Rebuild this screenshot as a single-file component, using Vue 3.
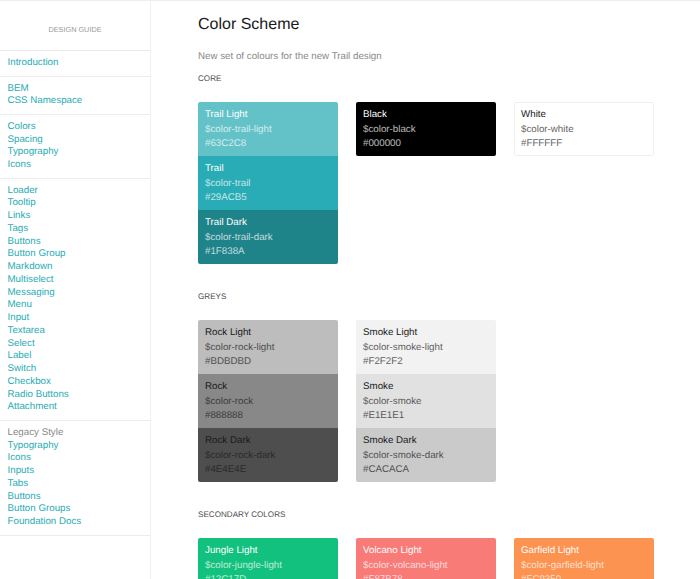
<template>
  <div class="page">
    <aside class="sidebar">
      <div class="brand">DESIGN GUIDE</div>
      <ul v-for="(group, i) in nav" :key="i" class="nav-group">
        <li v-for="item in group" :key="item" :class="{ muted: item === 'Legacy Style' }">{{ item }}</li>
      </ul>
    </aside>

    <main class="content">
      <h1 class="title">Color Scheme</h1>
      <p class="intro">New set of colours for the new Trail design</p>

      <section v-for="section in sections" :key="section.name" class="section">
        <h2 class="section-name">{{ section.name }}</h2>
        <div class="palette-row">
          <div v-for="(palette, p) in section.palettes" :key="p" class="palette">
            <div
              v-for="color in palette"
              :key="color.hex"
              class="swatch"
              :class="{ dark: color.dark, bordered: color.hex === 'FFFFFF' }"
              :style="{ background: '#' + color.hex }"
            >
              <div>{{ color.name }}</div>
              <div class="sub">{{ color.token }}</div>
              <div class="sub">#{{ color.hex }}</div>
            </div>
          </div>
        </div>
      </section>
    </main>
  </div>
</template>

<script setup>
const nav = [
  ['Introduction'],
  ['BEM', 'CSS Namespace'],
  ['Colors', 'Spacing', 'Typography', 'Icons'],
  ['Loader', 'Tooltip', 'Links', 'Tags', 'Buttons', 'Button Group', 'Markdown', 'Multiselect', 'Messaging', 'Menu', 'Input', 'Textarea', 'Select', 'Label', 'Switch', 'Checkbox', 'Radio Buttons', 'Attachment'],
  ['Legacy Style', 'Typography', 'Icons', 'Inputs', 'Tabs', 'Buttons', 'Button Groups', 'Foundation Docs']
]

const color = (name, token, hex, dark = false) => ({ name, token, hex, dark })

const sections = [
  {
    name: 'CORE',
    palettes: [
      [
        color('Trail Light', '$color-trail-light', '63C2C8'),
        color('Trail', '$color-trail', '29ACB5'),
        color('Trail Dark', '$color-trail-dark', '1F838A')
      ],
      [color('Black', '$color-black', '000000')],
      [color('White', '$color-white', 'FFFFFF', true)]
    ]
  },
  {
    name: 'GREYS',
    palettes: [
      [
        color('Rock Light', '$color-rock-light', 'BDBDBD', true),
        color('Rock', '$color-rock', '888888', true),
        color('Rock Dark', '$color-rock-dark', '4E4E4E', true)
      ],
      [
        color('Smoke Light', '$color-smoke-light', 'F2F2F2', true),
        color('Smoke', '$color-smoke', 'E1E1E1', true),
        color('Smoke Dark', '$color-smoke-dark', 'CACACA', true)
      ]
    ]
  },
  {
    name: 'SECONDARY COLORS',
    palettes: [
      [color('Jungle Light', '$color-jungle-light', '12C17D')],
      [color('Volcano Light', '$color-volcano-light', 'F87B78')],
      [color('Garfield Light', '$color-garfield-light', 'FC9350')]
    ]
  }
]
</script>

<style>
html,
body {
  margin: 0;
  background: #fff;
  overflow: hidden;
}
</style>

<style scoped>
.page {
  display: flex;
  height: 579px;
  overflow: hidden;
  border-top: 1px solid #eeeeee;
  box-sizing: border-box;
  font-family: "Liberation Sans", Arial, sans-serif;
  text-rendering: geometricPrecision;
}

.sidebar {
  width: 151px;
  flex: none;
  box-sizing: border-box;
  border-right: 1px solid #f0f0f0;
}

.brand {
  height: 50px;
  box-sizing: border-box;
  padding-top: 24px;
  text-align: center;
  font-size: 7.3px;
  line-height: 10px;
  color: #999;
  border-bottom: 1px solid #e8e8e8;
}

.nav-group {
  list-style: none;
  margin: 0;
  padding: 6px 0 5.8px 7.5px;
  border-bottom: 1px solid #ececec;
  font-size: 9.75px;
  line-height: 12.75px;
  color: #29acb5;
}

.muted {
  color: #888;
}

.content {
  flex: 1;
  padding: 15px 0 0 47px;
  min-width: 0;
}

.title {
  margin: 0;
  font-size: 16px;
  line-height: 18px;
  font-weight: 400;
  color: #1a1a1a;
}

.intro {
  margin: 16px 0 0;
  font-size: 9.75px;
  line-height: 13px;
  color: #8a8a8a;
}

.section-name {
  margin: 0;
  font-size: 8.1px;
  line-height: 11px;
  font-weight: 400;
  color: #4e4e4e;
}

.section {
  margin-top: 10px;
  padding-bottom: 27px;
}

.section + .section {
  margin-top: 0;
}

.palette-row {
  display: flex;
  gap: 18px;
  margin-top: 18px;
}

.palette {
  width: 140px;
  align-self: flex-start;
  border-radius: 2px;
  overflow: hidden;
}

.swatch {
  height: 54px;
  box-sizing: border-box;
  padding: 6px 7px 4px;
  font-size: 9.75px;
  line-height: 14.6px;
  color: #fff;
}

.swatch .sub {
  opacity: 0.7;
}

.swatch.dark {
  color: #1a1a1a;
}

.swatch.bordered {
  box-shadow: inset 0 0 0 1px #efefef;
  border-radius: 2px;
}
</style>
